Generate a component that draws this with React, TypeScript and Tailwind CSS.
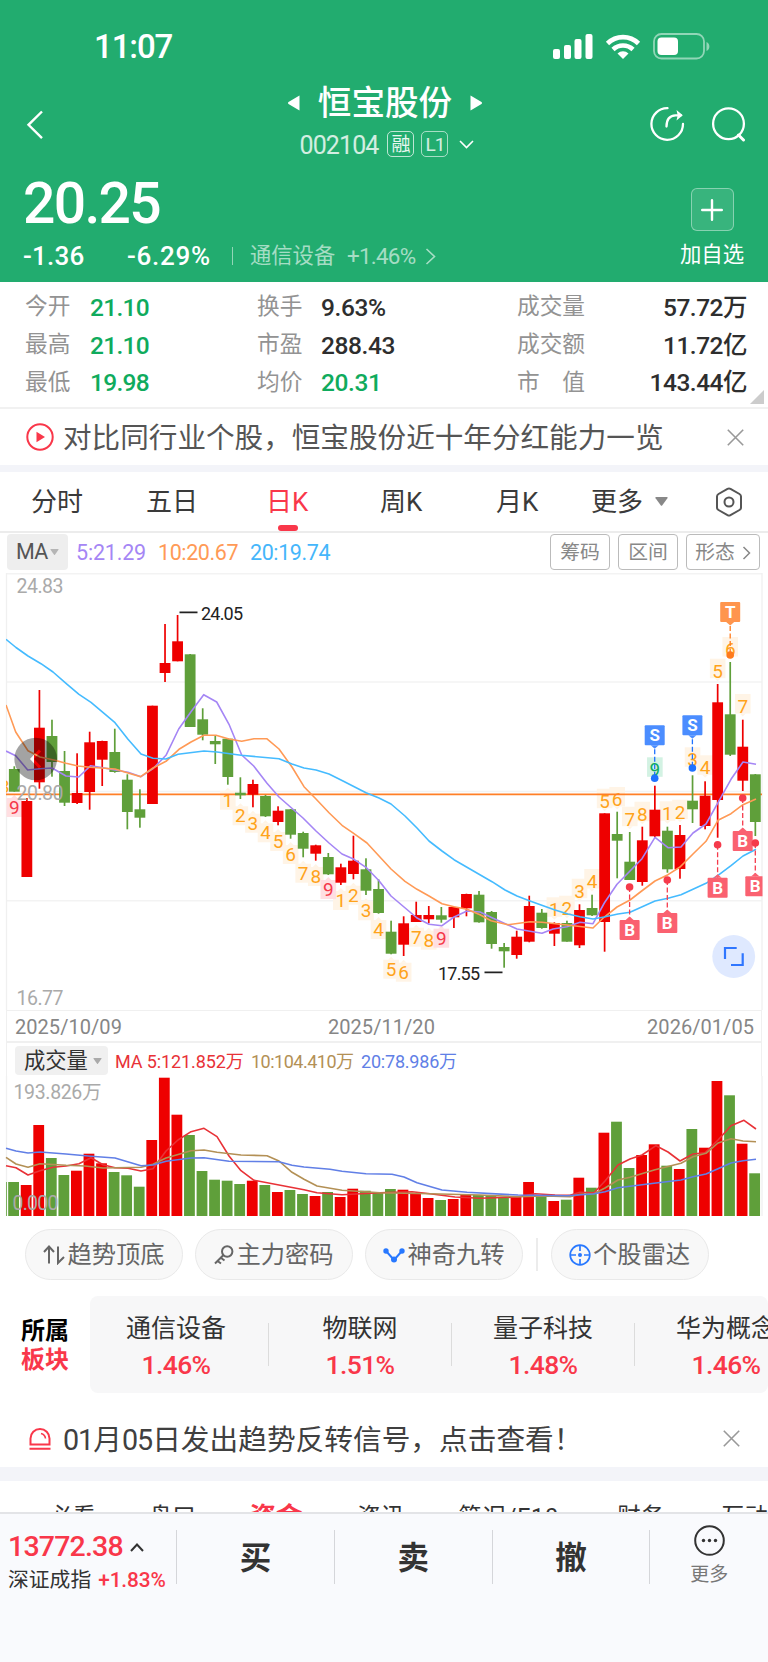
import type { ReactNode } from 'react';
import clsx from 'clsx';

type Candle = [up: 0 | 1, high: number, top: number, bottom: number, low: number];

const RED = '#ee0000';
const GREEN = '#5f9f3a';

// x of the middle of the nth trading day
const dayX = (i: number) => 14.3 + i * 12.56;

const candles: Candle[] = [
  [0, 766.3, 769, 791.7, 791.7], [1, 798, 801, 877, 877], [1, 690, 727.7, 782.3, 788.7], [0, 719.7, 736, 762, 776.7],
  [0, 751, 771, 802.7, 806], [1, 753.3, 793, 803, 804], [1, 731.7, 742.3, 792, 809.7], [1, 740.7, 741, 759.7, 786],
  [0, 728.7, 752, 772, 772.7], [0, 774.3, 779.7, 812, 829.3], [0, 789.3, 809.3, 817.7, 827.7], [1, 705.7, 705.7, 804, 804],
  [1, 624, 663, 673, 682], [1, 615, 641.3, 661.3, 661.3], [0, 654, 654.3, 727, 727], [0, 708.3, 719.3, 734.7, 740.3],
  [0, 736, 741, 744.3, 764], [0, 738, 738.7, 777, 784.7], [0, 777.3, 792.7, 795.3, 799], [1, 779.7, 784, 794.7, 807.3],
  [0, 795, 796, 816.3, 817], [1, 806.3, 810.7, 822, 825.3], [0, 809, 809.3, 834.7, 838.7], [0, 831.7, 833, 848.7, 857.3],
  [1, 844.7, 845.3, 853.7, 860.7], [0, 853, 857, 874.3, 875], [1, 863.7, 867.3, 882.7, 885], [1, 835.7, 860.7, 874, 879.3],
  [0, 858.3, 869.3, 890.7, 895], [0, 879.3, 889, 913, 913.7], [0, 920.7, 931.7, 953.7, 954.3], [1, 916.3, 923.3, 944.7, 956],
  [1, 901.7, 915, 922, 922], [1, 906, 915, 919.3, 923.3], [0, 907, 915.3, 919.7, 922.7], [1, 906.7, 907, 917.3, 928],
  [1, 893.7, 894, 908.3, 916.3], [0, 891, 894.7, 922.3, 922.7], [0, 911, 912, 944, 948.7], [0, 943, 947, 951.3, 967.7],
  [1, 930.7, 936.7, 955, 958.7], [1, 895.7, 906, 941.7, 942.3], [0, 909, 912.7, 928, 928.7], [1, 922.3, 923, 933.7, 946],
  [0, 920.7, 923, 941.7, 941.7], [1, 904.3, 910, 945.3, 948], [0, 894.7, 908, 915.3, 916], [1, 813.3, 813.3, 922, 951.7],
  [0, 811.7, 834, 840.7, 878.3], [0, 832, 861.7, 880, 880], [1, 826.7, 840.3, 882, 885.7], [1, 785.7, 809.7, 836.3, 837.3],
  [0, 826.7, 830.7, 869.3, 872.7], [1, 825, 835, 869, 878.7], [0, 775.3, 800.7, 809.3, 823], [1, 781.3, 795.7, 826, 829.3],
  [1, 684, 702.3, 800, 837.7], [0, 662, 714.3, 754.7, 756], [1, 719.7, 746.7, 780.7, 791], [0, 774, 774.3, 822, 836],
];

// top edge of each volume bar, baseline is 1216
const volumes = [
  1182, 1185, 1125, 1158, 1175, 1170.7, 1153.7, 1163.3, 1172, 1175.3, 1186.7, 1140, 1077.7, 1114.7, 1135, 1171, 1179.7,
  1180.7, 1184, 1180.7, 1185, 1192, 1190, 1194, 1196, 1192, 1197, 1188.7, 1190.7, 1192.3, 1189, 1189.7, 1193.3, 1198,
  1200, 1199, 1194.7, 1195, 1196, 1197.3, 1197, 1182, 1196, 1201, 1199.7, 1177.7, 1187.7, 1132.7, 1121.7, 1168, 1155,
  1144.3, 1165.7, 1169, 1129, 1147.7, 1081, 1095.3, 1143.7, 1173.3,
];

const ma5 = '6,751 15.7,755.7 27.7,770 40,768.7 52,768 66,776 78.7,777 90.7,765.7 103,767.7 115,770 128,772.3 141,776.7 153,768.7 166,755.3 178.7,729 191,711.7 203.7,694.7 216.7,702 229,724.3 241.7,755 253.7,766 267,783.3 279,797 303,818 316,831 329,843 342,854 354,859.3 366,867.3 379,880.7 391,896 404,907 417,918 429,924.3 442,925.7 454,917 467,911 480,912 491,917.3 517,929 530,931.3 542,933.3 553,929 567,926.7 580,922.3 593,923.7 604.3,903 617,884.3 630,871 642,858.7 655,837.3 668,847.7 681,847 693,833 706,824 718,802.7 731,779.3 743,762 756,764.3';
const ma10 = '6,705 15.7,732 28,750.7 40,757 55,760.3 66,763.3 78,766 90,767.3 115,769 128,773 140.7,776.7 153,768 166,761.3 179,749.3 191,742 204,735.3 216,735.3 229,739 241.7,741.3 254,738.7 266.7,738.7 279,749 292,767 304,786.7 316,799 329,812.7 342,825.3 354,833.7 367,843 379,856 391,869 405,881.3 417,889.3 429,896 442,903.7 454,906.7 467,909.3 480,914.7 491,920.7 508,924.7 530,921.7 542,922.3 567,925 593,928 604,917.3 617,907 630,900 643,890 655,881 668,874.7 680,867 693,854 706,841.3 718,820.3 731,813.7 743,804.7 756,799';
const ma20 = '6,639.3 16,647.5 28,656 41,663.7 53,672 66,683.3 79,694.3 91,702.3 115,722.7 128,739.3 141,754 153,758.3 166,759 178,754.3 204,751 217,752 241,755.3 268,757.7 279,758.7 292,764 304,768 316,770 329,774 343,781 366,792.7 379,798 391,804 405,816 417,828 429,841 442,851 454,859.7 492,881.7 505,890 517,896 530,901 555,910 568,914 580,916.7 593,919 604,917 618,914 630,912.3 655,901 668,898.3 681,894.7 706,883.3 718,875.3 731,865.7 743,856 756,849.3';

const vol5 = '6,1165.7 16,1167.7 28,1175 40,1170.7 53,1167.3 66,1166 79,1163.7 91,1157.7 103,1164.7 115,1167.7 128,1168.3 141,1171 153,1168.7 166,1151 178,1140 191,1131.7 204,1128.3 217,1136.7 229,1156 241,1170.7 254,1180.3 279,1185 304,1189.7 317,1192.7 342,1194.7 380,1192.7 412,1191.7 430,1193.7 455,1197 480,1198.3 518,1197 535,1193.7 555,1195 570,1195.3 580,1192.3 594,1192.7 605,1181 618,1165 630,1159 642,1155 656,1145.7 668,1152 680,1161 693,1154 705,1152.7 718,1140 731,1125.7 744,1120.3 756,1129';
const vol10 = '6,1157.3 16,1164 28,1167.3 40,1163.7 66,1165.3 85,1166 103,1168 141,1167.3 153,1164.3 166,1158 191,1150.7 204,1150 217,1152.3 241,1155 267,1155.7 279,1161 292,1172.3 304,1179.3 317,1186 342,1190.3 380,1192.7 430,1193.7 480,1195 518,1196.7 545,1196 570,1196.7 580,1194.3 594,1193.7 605,1188 618,1180 630,1177.3 655,1169.7 681,1163.3 693,1156.7 706,1153.3 718,1143 731,1138.7 743,1141 756,1141.7';
const vol20 = '6,1148.3 16,1151 28,1153 40,1152 66,1154 91,1156.3 115,1158 141,1165.7 153,1165 166,1161.3 191,1158 204,1157.7 229,1161.3 279,1161.7 292,1165.3 304,1167 330,1169.3 342,1171.3 366,1173.7 392,1174.3 404,1177 417,1182.7 442,1190 467,1192.3 518,1195 567,1195.7 593,1194 605,1191.7 618,1187.7 640,1185 656,1183 681,1180 693,1176.7 706,1174 718,1168.7 731,1163 743,1160.7 756,1159.3';

// nine-turn counters: day index, digit, y of the digit's middle
const turnsBelow: [number, string, number][] = [
  [17, '1', 799.7], [18, '2', 815.3], [19, '3', 822.7], [20, '4', 832.3], [21, '5', 841], [22, '6', 854],
  [23, '7', 872.7], [24, '8', 876], [26, '1', 900], [27, '2', 894.7], [28, '3', 910.3], [29, '4', 929],
  [30, '5', 968.7], [31, '6', 971.7], [32, '7', 936.7], [33, '8', 939.7],
  [0, '9', 807], [25, '9', 889], [34, '9', 937.7],
];
const turnsAbove: [number, string, number][] = [
  [43, '1', 909.3], [44, '2', 907.7], [45, '3', 890.7], [46, '4', 881], [47, '5', 800.7], [48, '6', 799],
  [49, '7', 818.7], [50, '8', 813.7], [51, '9', 769.3], [52, '1', 813.3], [53, '2', 811.7], [54, '3', 759.3],
  [55, '4', 767.3], [56, '5', 670.7], [57, '6', 649], [58, '7', 706],
];

function Turn({ i, n, y, below }: { i: number; n: string; y: number; below?: boolean }) {
  const x = dayX(i);
  const nine = n === '9';
  const bg = !nine ? '#fff4e6' : below ? '#ffdfe2' : '#d3f2e3';
  const fg = !nine ? '#ffa31a' : below ? '#f5384a' : '#10ab62';
  return (
    <g>
      <rect x={x - 7.8} y={below ? y - 9 : y - 12} width="15.6" height={below ? 19 : 19.5} fill={bg} />
      <path d={below ? `M${x - 3} ${y - 9}l3-3 3 3z` : `M${x - 3} ${y + 7.5}l3 3 3-3z`} fill={bg} />
      <text x={x} y={y + 6.8} fontSize="19" textAnchor="middle" fill={fg}>{n}</text>
    </g>
  );
}

function Marker({ x, y, dot, label }: { x: number; y: number; dot: number; label: 'B' | 'S' | 'T' }) {
  const buy = label === 'B';
  const fill = buy ? '#fa6170' : label === 'S' ? '#4b8dff' : '#ff954d';
  const dotFill = buy ? '#f53a4b' : label === 'S' ? '#1f72ff' : '#ff7a1c';
  return (
    <g>
      <path d={buy ? `M${x} ${dot}V${y}` : `M${x} ${y + 24}V${dot}`} stroke={dotFill} strokeWidth="1.3" strokeDasharray="5 2.5" />
      <circle cx={x} cy={dot} r="3.8" fill={dotFill} />
      <rect x={x - 10} y={y} width="20" height="20" rx="1" fill={fill} />
      <path d={buy ? `M${x - 4} ${y}l4-3.500 4 3.500z` : `M${x - 4} ${y + 20}l4 3.500 4-3.500z`} fill={fill} />
      <text x={x} y={y + 16} fontSize="17" fontWeight="700" textAnchor="middle" fill="#fff">{label}</text>
    </g>
  );
}

function PriceChart() {
  return (
    <svg className="block" width="768" height="437" viewBox="0 573 768 437" fill="none">
      <defs>
        <clipPath id="plot"><rect x="6" y="573" width="756.500" height="437" /></clipPath>
        <mask id="prev">
          <rect x="10" y="730" width="60" height="60" fill="#fff" />
          <path d="M40 750.500l-8 8.500 8 8.500" stroke="#000" strokeWidth="3" />
        </mask>
      </defs>
      <path d="M6 573.700H762M6 682H762M6 791.500H762M6 900.700H762" stroke="#f3f3f3" strokeWidth="1.500" />
      <path d="M6.500 573V1010M762 573V1010" stroke="#f0f0f0" strokeWidth="1.300" />
      <g clipPath="url(#plot)">
        <text x="-1" y="793" fontSize="19" fill="#ffa31a">3</text>
        {turnsBelow.map(([i, n, y]) => <Turn key={i} i={i} n={n} y={y} below />)}
        {turnsAbove.map(([i, n, y]) => <Turn key={i} i={i} n={n} y={y} />)}
        <path d="M6 794.300H762" stroke="#ff7f27" strokeWidth="1.800" />
        {candles.map(([up, high, top, bottom, low], i) => (
          <g key={i} fill={up ? RED : GREEN}>
            <rect x={dayX(i) - 0.85} y={high} width="1.7" height={low - high} />
            <rect x={dayX(i) - 5.4} y={top} width="10.8" height={bottom - top} />
          </g>
        ))}
        <g strokeWidth="1.600" strokeLinejoin="round">
          <polyline points={ma5} stroke="#a586f5" />
          <polyline points={ma10} stroke="#ff9a56" />
          <polyline points={ma20} stroke="#45bbff" />
        </g>
        <Marker x={730.2} y={602} dot={655} label="T" />
        <Marker x={654.7} y={725.3} dot={778.2} label="S" />
        <Marker x={692.4} y={715.3} dot={768} label="S" />
        <Marker x={629.6} y={920} dot={887} label="B" />
        <Marker x={667.3} y={913} dot={880} label="B" />
        <Marker x={717.6} y={877.7} dot={844.7} label="B" />
        <Marker x={742.7} y={831} dot={798} label="B" />
        <Marker x={755.3} y={876.3} dot={843} label="B" />
      </g>
      <circle cx="35.700" cy="759" r="21.300" fill="#000" fillOpacity=".36" mask="url(#prev)" />
      <g fontSize="19.500" fill="#aaa">
        <text x="16.500" y="593" textLength="47">24.83</text>
        <text x="16.500" y="799.500" textLength="47">20.80</text>
        <text x="16.500" y="1005" textLength="47">16.77</text>
      </g>
      <path d="M179.500 612.300h18M484.500 972.300h18" stroke="#222" strokeWidth="1.700" />
      <text x="201" y="619.500" fontSize="18" textLength="42" fill="#222">24.05</text>
      <text x="438" y="979.500" fontSize="18" textLength="42" fill="#222">17.55</text>
      <circle cx="733.700" cy="956.500" r="21.400" fill="#dfe9ff" />
      <path d="M736.700 948H725V959M742.700 953.300V965H731" stroke="#2f76ff" strokeWidth="2.200" />
    </svg>
  );
}

function VolumeChart() {
  return (
    <svg className="block" width="768" height="140" viewBox="0 1076 768 140" fill="none">
      <path d="M6.500 1076V1216M762 1076V1216" stroke="#f0f0f0" strokeWidth="1.300" />
      <text x="13.500" y="1099" fontSize="19.500" textLength="88" fill="#aaa">193.826万</text>
      <rect x="6" y="1182" width=".8" height="34" fill={GREEN} />
      {volumes.map((top, i) => (
        <rect key={i} x={dayX(i) - 6.1} y={top} width="10.8" height={1216 - top} fill={candles[i][0] ? RED : GREEN} />
      ))}
      <text x="12.500" y="1210" fontSize="19.500" textLength="46" fill="#aaa">0.000</text>
      <g strokeWidth="1.600" strokeLinejoin="round">
        <polyline points={vol5} stroke="#e83237" />
        <polyline points={vol10} stroke="#b39055" />
        <polyline points={vol20} stroke="#617fe6" />
      </g>
    </svg>
  );
}

function Header() {
  return (
    <header className="h-[282px] bg-[#22ac6f] text-white">
      <div className="flex h-[78px] items-end justify-between pr-[58px] pl-[94px]">
        <span className="mb-[15px] text-[33px] leading-none font-medium tracking-[-1.1px]">11:07</span>
        <svg className="mb-[17px]" width="158" height="30" viewBox="552 30 158 30" fill="none">
          <g fill="#fff">
            <rect x="553" y="48" width="7" height="10" rx="2" />
            <rect x="564" y="44" width="7" height="14" rx="2" />
            <rect x="574.500" y="38" width="7" height="20" rx="2" />
            <rect x="585.500" y="33" width="7" height="25" rx="2" />
            <path d="M623 58l-5.500-5.600a8 8 0 0 1 11 0z" />
            <rect x="657.500" y="36.500" width="20.500" height="17.500" rx="4" />
          </g>
          <path d="M607.500 42.500a22 22 0 0 1 31 0M613 48.500a14.500 14.500 0 0 1 20 0" stroke="#fff" strokeWidth="4.600" />
          <rect x="654" y="33" width="50" height="24.500" rx="7.500" stroke="#fff" strokeOpacity=".5" strokeWidth="1.800" />
          <path d="M706.500 41c3.800 1.300 3.800 7.500 0 9z" fill="#fff" fillOpacity=".5" />
        </svg>
      </div>

      <div className="flex h-[100px] items-start justify-between pr-[22px] pl-[26px]">
        <svg className="mt-[32px] w-[60px]" width="60" height="30" viewBox="0 0 60 30" fill="none" stroke="#fff" strokeWidth="2.4">
          <path d="M16 1.500L2.500 14.800 16 28.200" />
        </svg>
        <div className="ml-[34px] flex flex-col items-center">
          <div className="mt-[7px] flex h-[36px] items-center gap-[18px]">
            <svg width="12" height="16" viewBox="0 0 12 16" fill="#fff"><path d="M11.500.5v15L.5 9q-1-1 0-2z" /></svg>
            <h1 className="mt-px text-[33.6px] leading-none font-medium">恒宝股份</h1>
            <svg width="12" height="16" viewBox="0 0 12 16" fill="#fff"><path d="M.5.5v15L11.500 9q1-1 0-2z" /></svg>
          </div>
          <div className="mt-[9px] ml-[4px] flex h-[28px] items-center text-white/80">
            <span className="mt-[2px] mr-[9px] text-[25px] leading-none tracking-[-0.9px]">002104</span>
            <span className="mr-[7px] flex h-[26px] w-[27px] items-center justify-center rounded-[5px] border-[1.5px] border-white/70 text-[19px] leading-none text-white/90">融</span>
            <span className="mr-[11px] flex h-[26px] w-[27px] items-center justify-center rounded-[5px] border-[1.5px] border-white/60 text-[19px] leading-none tracking-[-1px]">L1</span>
            <svg width="15" height="9" viewBox="0 0 15 9" fill="none" stroke="#fff" strokeWidth="1.600"><path d="M1 1l6.500 6.500L14 1" /></svg>
          </div>
        </div>
        <svg className="mt-[28px]" width="96" height="36" viewBox="650 106 96 36" fill="none" stroke="#fff" strokeWidth="2.300" strokeLinecap="round">
          <path d="M667.500 108.200A15.800 15.800 0 1 0 683 124" />
          <path d="M666.500 126.500c0-7.500 3.500-11 9-11.200h5.500" />
          <path d="M676.500 110l6.300 5.300-6.300 5.300 1.200-5.300z" fill="#fff" stroke="none" />
          <circle cx="728.500" cy="123.700" r="15.400" />
          <path d="M738.500 135l5 5" strokeWidth="3" />
        </svg>
      </div>

      <div className="flex justify-between pr-[24px] pl-[23px]">
        <div>
          <div className="h-[52px] text-[57px] leading-[52px] font-medium tracking-[-1.7px]">20.25</div>
          <div className="mt-[13px] flex h-[26px] items-center text-[26px] leading-none">
            <span className="w-[104px] font-medium tracking-[0.2px]">-1.36</span>
            <span className="w-[105px] font-medium tracking-[0.7px]">-6.29%</span>
            <span className="h-[18px] w-px bg-white/50" />
            <span className="ml-[17px] w-[97px] text-[21.300px] text-white/60">通信设备</span>
            <span className="w-[78px] text-[22.500px] tracking-[-0.8px] text-white/60">+1.46%</span>
            <svg className="opacity-60" width="11" height="17" viewBox="0 0 11 17" fill="none" stroke="#fff" strokeWidth="1.600"><path d="M1.500 1l8 7.500-8 7.500" /></svg>
          </div>
        </div>
        <div className="flex w-[64px] flex-col items-center pt-[10px]">
          <div className="flex size-[43px] items-center justify-center rounded-md border-[1.5px] border-white/40 bg-white/10">
            <svg width="22" height="22" viewBox="0 0 22 22" stroke="#fff" strokeWidth="2.400" strokeLinecap="round"><path d="M11 1.200v19.600M1.200 11h19.600" /></svg>
          </div>
          <span className="mt-[13px] text-[21.400px] leading-none whitespace-nowrap">加自选</span>
        </div>
      </div>
    </header>
  );
}

const stats = [
  ['今开', '21.10', '换手', '9.63%', '成交量', '57.72万'],
  ['最高', '21.10', '市盈', '288.43', '成交额', '11.72亿'],
  ['最低', '19.98', '均价', '20.31', '市　值', '143.44亿'],
];

function Stats() {
  return (
    <section className="relative h-[127px] border-b-2 border-[#f1f1f1] pt-[7px]">
      {stats.map(([a, av, b, bv, c, cv]) => (
        <div key={a} className="flex h-[37.700px] items-center pr-[21px] pl-[25px] text-[24.500px] leading-none font-medium">
          <span className="w-[65px] text-[22.700px] font-normal text-[#939393]">{a}</span>
          <span className="mt-px w-[167px] tracking-[-0.7px] text-[#0fab5d]">{av}</span>
          <span className="w-[64px] text-[22.700px] font-normal text-[#939393]">{b}</span>
          <span className={clsx('mt-px w-[196px] tracking-[-0.4px]', b === '均价' ? 'text-[#0fab5d]' : 'text-[#2e2e2e]')}>{bv}</span>
          <span className="text-[22.700px] font-normal text-[#939393]">{c}</span>
          <span className="mt-px ml-auto tracking-[-0.5px] text-[#2e2e2e]">{cv}</span>
        </div>
      ))}
      <svg className="absolute right-[4px] bottom-[3px]" width="14" height="14" viewBox="0 0 14 14" fill="#ccc"><path d="M14 0v14H0z" /></svg>
    </section>
  );
}

function Close() {
  return (
    <svg className="ml-auto" width="17" height="17" viewBox="0 0 17 17" stroke="#999" strokeWidth="1.600"><path d="M.8.8l15.400 15.400M16.200.8L.8 16.200" /></svg>
  );
}

const Caret = ({ className }: { className: string }) => (
  <svg className={className} viewBox="0 0 10 7" fill="currentColor"><path d="M.8 0h8.400q1 0 .4 1L5.500 6.600q-.5.6-1 0L.4 1Q-.2 0 .8 0z" /></svg>
);

function Periods() {
  return (
    <nav className="flex h-[61px] items-center border-b-2 border-[#ececec] text-[26px] leading-none whitespace-nowrap text-[#3a3a3a]">
      <span className="ml-[31px] w-[115px]">分时</span>
      <span className="w-[120px]">五日</span>
      <span className="relative w-[114px] text-[#f9374a]">
        日K
        <i className="absolute top-[36px] left-[12px] h-[6px] w-[20px] rounded-full bg-[#f9374a]" />
      </span>
      <span className="w-[116px]">周K</span>
      <span className="w-[95px]">月K</span>
      <span className="w-[64px]">更多</span>
      <Caret className="h-[9px] w-[13px] text-[#888]" />
      <svg className="ml-[47px]" width="28" height="30" viewBox="0 0 28 30" fill="none" stroke="#555" strokeWidth="2">
        <path d="M12.500 1.800q1.500-.8 3 0l9 5.200q1.500.9 1.500 2.600v10.800q0 1.700-1.500 2.600l-9 5.200q-1.500.8-3 0l-9-5.200Q2 22.100 2 20.400V9.600Q2 7.900 3.500 7z" />
        <circle cx="14" cy="15" r="4.500" />
      </svg>
    </nav>
  );
}

function Pill({ icon, children }: { icon: ReactNode; children: ReactNode }) {
  return (
    <div className="flex h-[51px] w-[158px] shrink-0 items-center justify-center gap-[2px] rounded-full border border-[#e9e9e9] bg-[#f8f8f8] pt-px text-[24.300px] leading-none whitespace-nowrap text-[#666]">
      {icon}
      {children}
    </div>
  );
}

const sectors = [['通信设备', '1.46%'], ['物联网', '1.51%'], ['量子科技', '1.48%'], ['华为概念', '1.46%']];

export default function App() {
  return (
    <div lang="zh-CN" className="flex h-[1662px] w-[768px] flex-col overflow-hidden bg-white font-[Roboto,'Noto_Sans_CJK_SC',sans-serif]">
      <Header />
      <Stats />

      <div className="flex h-[56px] items-center pr-[24px] pl-[26px]">
        <svg width="28" height="28" viewBox="0 0 28 28" fill="none">
          <circle cx="14" cy="14" r="12.700" stroke="#f9374a" strokeWidth="2" />
          <path d="M10.500 8.800v10.400l8.500-5.200z" fill="#f9374a" />
        </svg>
        <span className="mt-[2px] ml-[9px] text-[28.600px] leading-none whitespace-nowrap text-[#555]">对比同行业个股，恒宝股份近十年分红能力一览</span>
        <Close />
      </div>
      <div className="h-[7px] shrink-0 bg-[#f3f4f9]" />

      <Periods />

      <div className="flex h-[40px] items-center pt-px pr-[8px] pb-[3px] pl-[7px] text-[21.500px] leading-none whitespace-nowrap">
        <div className="flex h-[36px] w-[61px] items-center rounded-[4px] bg-[#eeeeee] pl-[9px] text-[#555]">
          <span className="w-[34px] tracking-[-0.8px]">MA</span>
          <Caret className="h-[6px] w-[9px] text-[#b5b5b5]" />
        </div>
        <span className="mt-[2px] ml-[8px] w-[82px] tracking-[-0.2px] text-[#a586f5]">5:21.29</span>
        <span className="mt-[2px] w-[92px] tracking-[-0.4px] text-[#ff9a56]">10:20.67</span>
        <span className="mt-[2px] tracking-[-0.4px] text-[#45b6fb]">20:19.74</span>
        <div className="ml-auto flex gap-[8px] text-[19.800px] text-[#888]">
          <span className="flex h-[36px] w-[60px] items-center justify-center rounded-[4px] border-[1.5px] border-[#bbb] pt-px">筹码</span>
          <span className="flex h-[36px] w-[60px] items-center justify-center rounded-[4px] border-[1.5px] border-[#bbb] pt-px">区间</span>
          <span className="flex h-[36px] w-[74px] items-center justify-center gap-[7px] rounded-[4px] border-[1.5px] border-[#bbb] pt-px">
            形态
            <svg width="9" height="14" viewBox="0 0 9 14" fill="none" stroke="#888" strokeWidth="1.500"><path d="M1.500 1l6 6-6 6" /></svg>
          </span>
        </div>
      </div>

      <PriceChart />
      <div className="mx-[6px] flex h-[33px] shrink-0 items-center border border-b-2 border-[#f0f0f0] pt-[2px] pr-[7px] pl-[8px] text-[20px] leading-none tracking-[0.05px] text-[#868686]">
        <span className="w-[313px]">2025/10/09</span>
        <span>2025/11/20</span>
        <span className="ml-auto">2026/01/05</span>
      </div>
      <div className="mx-[6px] flex h-[33px] shrink-0 items-center border-x border-[#f0f0f0] pt-[2px] pl-[8px] text-[18px] leading-none whitespace-nowrap">
        <div className="flex h-[29px] w-[93px] items-center rounded-[4px] bg-[#f0f0f0] pl-[9px] text-[#333]">
          <span className="mr-[5px] text-[21.300px]">成交量</span>
          <Caret className="h-[6px] w-[9px] text-[#aaa]" />
        </div>
        <span className="mt-[2px] ml-[7px] w-[136px] tracking-[-0.1px] text-[#e83237]">MA 5:121.852万</span>
        <span className="mt-[2px] w-[110px] tracking-[-0.5px] text-[#b39055]">10:104.410万</span>
        <span className="mt-[2px] tracking-[-0.2px] text-[#617fe6]">20:78.986万</span>
      </div>
      <VolumeChart />

      <div className="mt-[13px] flex shrink-0 items-center pl-[25px]">
        <Pill icon={<svg width="22" height="20" viewBox="0 0 22 20" fill="none" stroke="#666" strokeWidth="2"><path d="M1 7l5-5.500 5 5.500M6 2v16.500M15 1.500v16.500l6-6" /></svg>}>趋势顶底</Pill>
        <div className="w-[12px]" />
        <Pill icon={<svg width="20" height="20" viewBox="0 0 20 20" fill="none" stroke="#666" strokeWidth="2"><circle cx="13.200" cy="6.500" r="5.200" /><path d="M9.500 10L1 18.500M3.500 16l3.500 2.500M6.500 12.500l4 3" /></svg>}>主力密码</Pill>
        <div className="w-[12px]" />
        <Pill icon={<svg width="22" height="15" viewBox="0 0 22 15" fill="none" stroke="#2878ff" strokeWidth="2"><path d="M3 3l8 9 8-9" /><g fill="#2878ff" stroke="none"><circle cx="3" cy="3" r="2.700" /><circle cx="11" cy="11.500" r="3" /><circle cx="19" cy="3" r="2.700" /></g></svg>}>神奇九转</Pill>
        <div className="mx-[13px] h-[33px] w-[1.5px] bg-[#ececec]" />
        <Pill icon={<svg width="22" height="22" viewBox="0 0 22 22" fill="none" stroke="#2878ff" strokeWidth="1.700"><circle cx="11" cy="11" r="9.800" /><path d="M11 1v6M11 15v6M1 11h6M15 11h6" /><circle cx="11" cy="11" r="2" fill="#2878ff" stroke="none" /></svg>}>个股雷达</Pill>
      </div>

      <div className="mt-[16px] flex h-[97px] shrink-0">
        <div className="flex w-[90px] flex-col pt-[21px] pl-[21px] text-[24px] leading-[28.500px] font-bold text-black">
          <span>所属</span>
          <span className="text-[#f9374a]">板块</span>
        </div>
        <div className="flex w-[678px] shrink-0 items-center overflow-hidden rounded-lg bg-[#f7f7f8]">
          {sectors.map(([name, pct], i) => (
            <div
              key={name}
              className={clsx(
                'flex h-[43px] shrink-0 flex-col items-center justify-center gap-[11px] pt-[6px] leading-none whitespace-nowrap',
                i === 0 ? 'w-[178px] pr-[6px]' : 'w-[183px] border-l-[1.5px] border-[#dcdcdc]',
              )}
            >
              <span className="text-[25px] text-[#333]">{name}</span>
              <span className="text-[26.500px] font-medium tracking-[-0.6px] text-[#f9374a]">{pct}</span>
            </div>
          ))}
        </div>
      </div>

      <div className="mt-[12px] flex h-[62px] shrink-0 items-center pt-[5px] pr-[28px] pl-[28px]">
        <svg width="24" height="24" viewBox="0 0 24 24" fill="none" stroke="#f9374a" strokeWidth="2">
          <path d="M2.500 17.500v-6a9.500 9.500 0 0 1 19 0v6zM1.500 21.800h21" />
          <path d="M13 6.500q4 1 4.500 5" strokeWidth="1.600" />
        </svg>
        <span className="mt-[4px] ml-[11px] text-[28.700px] leading-none whitespace-nowrap text-[#404040]">
          <span className="tracking-[-1px]">01</span>月<span className="tracking-[-1px]">05</span>日发出趋势反转信号，点击查看！
        </span>
        <Close />
      </div>
      <div className="h-[14px] shrink-0 bg-[#f3f4f9]" />

      <div className="flex h-[31px] shrink-0 items-start overflow-hidden pt-[25px] text-[23.500px] leading-none whitespace-nowrap text-[#333]">
        <span className="ml-[49px] w-[101px]">必看</span>
        <span className="w-[102px]">盘口</span>
        <span className="-mt-[2px] w-[109px] text-[26.500px] font-bold text-[#f9374a]">资金</span>
        <span className="w-[102px]">资讯</span>
        <span className="w-[161px] tracking-[0.8px]">简况/F10</span>
        <span className="w-[105px]">财务</span>
        <span>互动</span>
      </div>

      <footer className="flex h-[150px] shrink-0 items-start border-t-2 border-[#e3e4e7] bg-[#f9fafd] pt-[16px]">
        <div className="h-[60px] w-[176px] pt-[4px] pl-[8px] whitespace-nowrap">
          <div className="flex h-[27px] items-center text-[28.500px] leading-none font-medium tracking-[-0.8px] text-[#f9374a]">
            13772.38
            <svg className="ml-[7px]" width="14" height="9" viewBox="0 0 14 9" fill="none" stroke="#333" strokeWidth="2"><path d="M1 8l6-6.500L13 8" /></svg>
          </div>
          <div className="mt-[8px] flex h-[22px] items-center text-[20.800px] leading-none text-[#333]">
            深证成指<span className="ml-[7px] font-medium tracking-[-0.1px] text-[#f9374a]">+1.83%</span>
          </div>
        </div>
        {['买', '卖', '撤'].map(label => (
          <div key={label} className="flex h-[54px] w-[157.800px] items-center justify-center border-l-[1.5px] border-[#d5d6da] pt-[4px] text-[31.500px] leading-none font-bold text-[#333]">{label}</div>
        ))}
        <div className="flex h-[54px] flex-1 flex-col items-center border-l-[1.5px] border-[#d5d6da]">
          <svg className="-mt-[5px] shrink-0" width="31" height="31" viewBox="0 0 31 31" fill="none">
            <circle cx="15.500" cy="15.500" r="14.300" stroke="#333" strokeWidth="2" />
            <g fill="#333"><circle cx="9.500" cy="15.500" r="1.700" /><circle cx="15.500" cy="15.500" r="1.700" /><circle cx="21.500" cy="15.500" r="1.700" /></g>
          </svg>
          <span className="mt-[9px] text-[19px] leading-none text-[#777]">更多</span>
        </div>
      </footer>
    </div>
  );
}
